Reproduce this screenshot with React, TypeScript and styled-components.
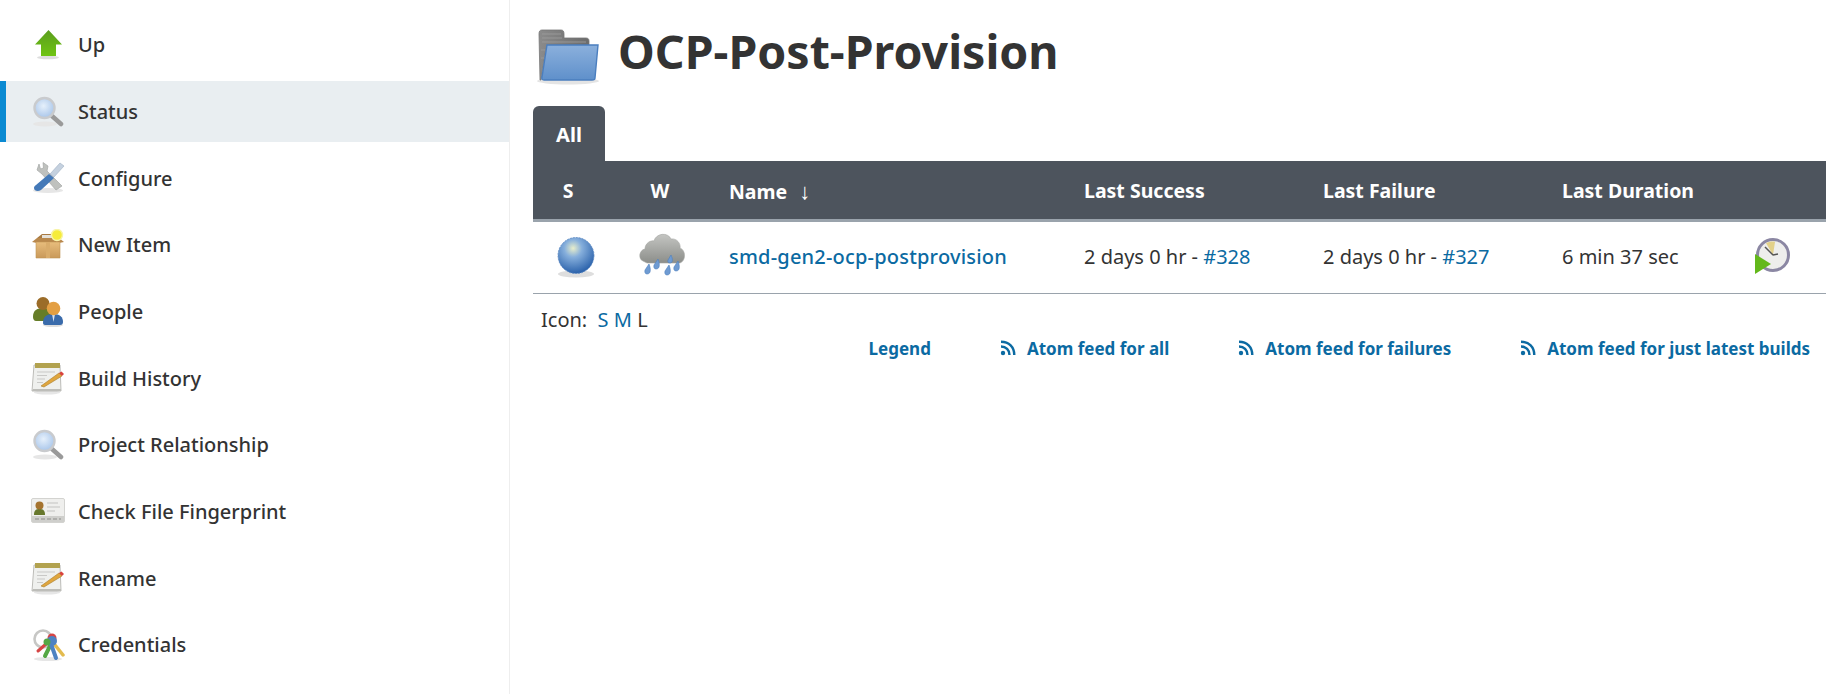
import React from "react";
import styled, { createGlobalStyle } from "styled-components";

const GlobalStyle = createGlobalStyle`
  html, body {
    margin: 0;
    padding: 0;
    background: #fff;
    color: #333;
    font-family: "Noto Sans", "Open Sans", sans-serif;
    overflow: hidden;
  }
`;

//Icons
const Defs = () => (
  <svg width="0" height="0" style={{ position: "absolute" }}>
    <defs>
      <radialGradient id="lens" cx="45%" cy="40%" r="60%">
        <stop offset="0%" stopColor="#e6f0fb" />
        <stop offset="100%" stopColor="#a9c6ea" />
      </radialGradient>
      <linearGradient id="arrow" x1="0" y1="0" x2="0" y2="1">
        <stop offset="0%" stopColor="#5b9d1e" />
        <stop offset="100%" stopColor="#6fc412" />
      </linearGradient>
      <linearGradient id="box" x1="0" y1="0" x2="0" y2="1">
        <stop offset="0%" stopColor="#e8bd7c" />
        <stop offset="100%" stopColor="#c9995a" />
      </linearGradient>
      <radialGradient id="ball" cx="42%" cy="30%" r="70%">
        <stop offset="0%" stopColor="#e8eecb" />
        <stop offset="35%" stopColor="#86afdc" />
        <stop offset="100%" stopColor="#2b62ab" />
      </radialGradient>
      <linearGradient id="cloud" x1="0" y1="0" x2="0" y2="1">
        <stop offset="0%" stopColor="#c4c5c2" />
        <stop offset="100%" stopColor="#8c8e8a" />
      </linearGradient>
      <linearGradient id="folderFront" x1="0" y1="0" x2="0" y2="1">
        <stop offset="0%" stopColor="#8bb0dc" />
        <stop offset="100%" stopColor="#5f90cb" />
      </linearGradient>
      <linearGradient id="folderBack" x1="0" y1="0" x2="1" y2="0">
        <stop offset="0%" stopColor="#8b8b8b" />
        <stop offset="100%" stopColor="#6b6b6b" />
      </linearGradient>
    </defs>
  </svg>
);

const UpIcon = () => (
  <svg width="32" height="32" viewBox="0 0 32 32">
    <ellipse cx="16" cy="28.5" rx="11" ry="1.8" fill="#ddd" />
    <path d="M16.5 1 L30 15.5 H24 V27 H9 V15.5 H3 Z" fill="url(#arrow)" />
  </svg>
);

const SearchIcon = () => (
  <svg width="32" height="32" viewBox="0 0 32 32">
    <ellipse cx="13" cy="28" rx="12" ry="2.5" fill="#e6e6e6" />
    <path d="M20 20 L29 28" stroke="#9a9a9a" strokeWidth="4.5" strokeLinecap="round" />
    <circle cx="12.5" cy="12" r="10" fill="url(#lens)" stroke="#c9cbce" strokeWidth="2.4" />
  </svg>
);

const ConfigureIcon = () => (
  <svg width="34" height="32" viewBox="0 0 34 32">
    <ellipse cx="17" cy="28.5" rx="15" ry="2.4" fill="#e6e6e6" />
    <path d="M8 2 L6 8 L11 12 L25 28 L31 24 L16 9 L17 4 L12 0.5 L12.5 6 L9.5 7 Z" fill="#bfc1be" stroke="#a5a7a6" strokeWidth="0.7" />
    <path d="M29 1 L33 4 L23 15 L19 12 Z" fill="#c5d1df" stroke="#9fb0c2" strokeWidth="0.6" />
    <path d="M18 12 L23 16 L10 28 C7 30 3 29 3 26 C3 25 3.500 24 5 23 Z" fill="#4479b8" />
  </svg>
);

const NewItemIcon = () => (
  <svg width="34" height="32" viewBox="0 0 34 32">
    <path d="M6 9 L11 5 H25 L28 9 Z" fill="#a97a42" />
    <rect x="11" y="6" width="13" height="4" fill="#e5e1d8" />
    <path d="M1 13 L6 9 H28 L33 13 L28 14 H6 Z" fill="#b9884c" />
    <path d="M5 13 H29 V29 H5 Z" fill="url(#box)" stroke="#c19355" strokeWidth="0.6" />
    <rect x="15" y="13" width="4" height="16" fill="#d9ac6b" />
    <circle cx="26" cy="6" r="5.5" fill="#f6ec3a" stroke="#f8f4a8" strokeWidth="1.4" />
  </svg>
);

const PeopleIcon = () => (
  <svg width="32" height="32" viewBox="0 0 32 32">
    <ellipse cx="21" cy="29" rx="10" ry="2" fill="#ddd" />
    <path d="M1 21 C1 14 5 12 12 12 C18 12 20 14 20 19 L14 25 H4 C2 25 1 23 1 21 Z" fill="#667d28" />
    <circle cx="11" cy="7.500" r="6.500" fill="#9b6c28" />
    <path d="M11 27 C11 20 15 18 21.500 18 C28 18 31 21 31 26 C31 28 30 29 28 29 H13 C12 29 11 28 11 27 Z" fill="#3a6bab" />
    <path d="M20 18 H23 L21.500 26 Z" fill="#dce5ef" />
    <circle cx="21.500" cy="12.500" r="6.800" fill="#e39f43" />
  </svg>
);

const NotepadIcon = () => (
  <svg width="34" height="33" viewBox="0 0 34 33">
    <ellipse cx="16" cy="30.500" rx="13" ry="2" fill="#e6e6e6" />
    <path d="M3 3 H29 L30 29 H1 Z" fill="#eff0ee" stroke="#bcbcb8" strokeWidth="1" />
    <path d="M2 27 H30 V29 H1 Z" fill="#bdbdb9" />
    <rect x="4" y="1" width="25" height="5" fill="#b2a24f" />
    <path d="M6 10 H24 M6 13.500 H16 M6 17 H14 M6 20.500 H12" stroke="#c9c9c7" strokeWidth="1" />
    <path d="M10 24 L28 11 L31 14 L13 25 Z" fill="#e0a63e" stroke="#a87d2e" strokeWidth="0.6" />
    <path d="M28 11 L30.500 9.500 L33 12 L31 14 Z" fill="#d9423d" />
  </svg>
);

const FingerprintIcon = () => (
  <svg width="34" height="26" viewBox="0 0 34 26">
    <rect x="0.500" y="0.500" width="33" height="24" rx="1.500" fill="#efefed" stroke="#d3d3d0" />
    <rect x="1" y="18" width="32" height="6" fill="#cfcfcc" />
    <path d="M3 17 C3 12 5 11 8.500 11 C12 11 14 12 14 17 Z" fill="#67782d" />
    <circle cx="8.500" cy="7.500" r="4" fill="#a5732f" />
    <path d="M16 5 H27 M16 9 H29 M16 13 H24" stroke="#c4c4c1" strokeWidth="1.200" />
    <path d="M4 21 H30" stroke="#8f8f8c" strokeWidth="1" strokeDasharray="4 2" />
  </svg>
);

const CredentialsIcon = () => (
  <svg width="34" height="34" viewBox="0 0 34 34">
    <ellipse cx="17" cy="31" rx="14" ry="2" fill="#e6e6e6" />
    <circle cx="12" cy="11" r="8.500" fill="none" stroke="#c7c7c5" strokeWidth="2.600" />
    <path d="M24 17 L32 27" stroke="#e3bb4e" strokeWidth="3.500" strokeLinecap="round" />
    <circle cx="21" cy="10" r="4.500" fill="#d64545" />
    <path d="M15 16 L7 23" stroke="#d64545" strokeWidth="3" strokeLinecap="round" />
    <path d="M19 18 L14 28" stroke="#55a845" strokeWidth="4" strokeLinecap="round" />
    <path d="M20 16 L25 30" stroke="#4d82c2" strokeWidth="4" strokeLinecap="round" />
    <circle cx="21" cy="13" r="5" fill="#4d82c2" />
    <circle cx="16" cy="14" r="3.500" fill="#55a845" />
  </svg>
);

const FolderIcon = () => (
  <svg width="64" height="58" viewBox="0 0 64 58">
    <ellipse cx="32" cy="53" rx="31" ry="3.500" fill="#e4e4e4" />
    <path d="M3 6 C3 3 4 2 6 2 H25 C27 2 28 3 28 6 V10 H50 C52 10 53 11 53 13 V20 H10 L5 52 H4 Z" fill="url(#folderBack)" stroke="#777" strokeWidth="0.8" />
    <path d="M6 6 H25 M6 10 H26 M6 14 H50 M5 22 H9 M5 30 H8" stroke="#a0a0a0" strokeWidth="0.8" />
    <path d="M11 17 H62 L59 50 C59 51 58 52 56 52 H8 C6 52 5.500 51 6 49 Z" fill="url(#folderFront)" stroke="#4a7ebf" strokeWidth="1.400" />
  </svg>
);

const BallIcon = () => (
  <svg width="40" height="42" viewBox="0 0 40 42">
    <ellipse cx="20" cy="37" rx="18" ry="3.500" fill="#dedede" />
    <circle cx="20" cy="18.500" r="18" fill="url(#ball)" stroke="#5a88c2" strokeWidth="0.8" strokeDasharray="2 1" />
  </svg>
);

const RainIcon = () => (
  <svg width="46" height="44" viewBox="0 0 46 44">
    <path d="M4 29 C-1 27 0 18 6 17 C6 11 12 8 15 9 C17 1 29 0 32 7 C38 6 42 12 41 16 C47 18 47 29 41 31 H8 Z" fill="url(#cloud)" stroke="#a4a6a2" strokeWidth="0.6" />
    <g fill="#6f9bd2" stroke="#4e7fbd" strokeWidth="0.6">
      <path d="M6 38 L10 32 C12 37 12 42 8 42 C6 42 5.500 40 6 38 Z" />
      <path d="M15 33 L19 27 C21 32 21 37 17 37 C15 37 14.500 35 15 33 Z" />
      <path d="M26 39 L30 33 C32 38 32 43 28 43 C26 43 25.500 41 26 39 Z" />
      <path d="M35 35 L39 29 C41 34 41 39 37 39 C35 39 34.500 37 35 35 Z" />
      <path d="M29 28 L32 23 C34 27 34 31 31 31 C29 31 28.500 30 29 28 Z" />
    </g>
  </svg>
);

const ClockIcon = () => (
  <svg width="36" height="36" viewBox="0 0 36 36">
    <circle cx="19" cy="17" r="15.500" fill="#eeeeec" stroke="#8b87a3" strokeWidth="3" />
    <path d="M19 17 L12 5 C14 4 20 3 21 4 Z" fill="#e3d189" />
    <path d="M19 17 L11 9 M19 17 L24 16" stroke="#555" strokeWidth="1.500" />
    <path d="M1 16 L17 26 L1 36 Z" fill="#63b81b" />
  </svg>
);

const RssIcon = () => (
  <svg width="16" height="16" viewBox="0 0 16 16">
    <circle cx="3" cy="13" r="2.200" fill="#0b6aa2" />
    <path d="M1 6.500 C6 6.500 9.500 10 9.500 15" fill="none" stroke="#0b6aa2" strokeWidth="2.400" />
    <path d="M1 1.700 C9 1.700 14.300 7 14.300 15" fill="none" stroke="#0b6aa2" strokeWidth="2.400" />
  </svg>
);

const menu = [
  { label: "Up", icon: <UpIcon /> },
  { label: "Status", icon: <SearchIcon />, active: true },
  { label: "Configure", icon: <ConfigureIcon /> },
  { label: "New Item", icon: <NewItemIcon /> },
  { label: "People", icon: <PeopleIcon /> },
  { label: "Build History", icon: <NotepadIcon /> },
  { label: "Project Relationship", icon: <SearchIcon /> },
  { label: "Check File Fingerprint", icon: <FingerprintIcon /> },
  { label: "Rename", icon: <NotepadIcon /> },
  { label: "Credentials", icon: <CredentialsIcon /> },
];

const feeds = [
  "Atom feed for all",
  "Atom feed for failures",
  "Atom feed for just latest builds",
];

const App: React.FC = () => {
  return (
    <Page>
      <GlobalStyle />
      <Defs />
      <Sidebar>
        {menu.map((item) => (
          <MenuItem key={item.label} $active={item.active}>
            <MenuIcon>{item.icon}</MenuIcon>
            {item.label}
          </MenuItem>
        ))}
      </Sidebar>
      <Main>
        <Title>
          <FolderIcon />
          <h1>OCP-Post-Provision</h1>
        </Title>
        <Tab>All</Tab>
        <ProjectTable>
          <colgroup>
            <col width="70" />
            <col width="126" />
            <col width="355" />
            <col width="239" />
            <col width="239" />
            <col width="190" />
            <col />
          </colgroup>
          <thead>
            <tr>
              <th className="center">S</th>
              <th className="center weather">W</th>
              <th>
                Name<SortArrow>↓</SortArrow>
              </th>
              <th>Last Success</th>
              <th>Last Failure</th>
              <th>Last Duration</th>
              <th />
            </tr>
          </thead>
          <tbody>
            <tr>
              <td className="center status">
                <BallIcon />
              </td>
              <td className="center rain">
                <RainIcon />
              </td>
              <td>
                <Link $medium>smd-gen2-ocp-postprovision</Link>
              </td>
              <td>
                2 days 0 hr - <Link>#328</Link>
              </td>
              <td>
                2 days 0 hr - <Link>#327</Link>
              </td>
              <td>6 min 37 sec</td>
              <td className="action">
                <ClockIcon />
              </td>
            </tr>
          </tbody>
        </ProjectTable>
        <IconSizes>
          Icon:&nbsp;&nbsp;
          <Link>S</Link> <Link>M</Link> <span>L</span>
        </IconSizes>
        <Feeds>
          <FeedLink>Legend</FeedLink>
          {feeds.map((feed) => (
            <FeedLink key={feed}>
              <RssIcon />
              {feed}
            </FeedLink>
          ))}
        </Feeds>
      </Main>
    </Page>
  );
};

const Page = styled.div`
  display: flex;
  height: 694px;
  overflow: hidden;
`;

const Sidebar = styled.nav`
  flex: 0 0 509px;
  display: flex;
  flex-direction: column;
  gap: 5.67px;
  padding-top: 14.400px;
  border-right: 1px solid #eee;
`;

const MenuItem = styled.a<{ $active?: boolean }>`
  display: flex;
  align-items: center;
  gap: 14px;
  height: 61px;
  flex: none;
  padding-left: ${(p) => (p.$active ? "26px" : "32px")};
  font-size: 20px;
  font-weight: 500;
  color: #333;
  background: ${(p) => (p.$active ? "#e9eef1" : "transparent")};
  border-left: ${(p) => (p.$active ? "6px solid #0b8ad2" : "0")};
`;

const MenuIcon = styled.span`
  flex: none;
  width: 32px;
  height: 34px;
  display: flex;
  align-items: center;
  justify-content: center;
  svg {
    flex: none;
    filter: blur(0.3px);
  }
`;

const Main = styled.main`
  flex: 1;
  min-width: 0;
  padding: 28px 0 0 23px;
`;

const Title = styled.div`
  display: flex;
  align-items: flex-start;
  gap: 18px;
  height: 58px;
  padding-left: 3px;
  margin-bottom: 20px;
  h1 {
    margin: 0;
    font-size: 46.500px;
    font-weight: 700;
    line-height: 46px;
    color: #333;
  }
`;

const Tab = styled.div`
  width: 72px;
  height: 55px;
  box-sizing: border-box;
  padding-top: 15px;
  background: #4d545d;
  border-radius: 6px 6px 0 0;
  color: #fff;
  font-size: 20px;
  font-weight: 700;
  text-align: center;
  line-height: 27px;
`;

const ProjectTable = styled.table`
  width: 100%;
  table-layout: fixed;
  border-collapse: collapse;
  font-size: 20px;
  th {
    height: 59px;
    padding: 1px 0 0;
    box-sizing: border-box;
    background: #4d545d;
    border-bottom: 3px solid #9aa3ac;
    color: #fff;
    font-size: 19.500px;
    font-weight: 700;
    text-align: left;
  }
  td {
    height: 65px;
    padding: 0 0 2px;
    border-bottom: 1px solid #9aa3ac;
    vertical-align: middle;
    svg {
      display: block;
      filter: blur(0.3px);
    }
  }
  .center {
    text-align: center;
    svg {
      margin: 0 auto;
    }
  }
  .weather {
    padding-right: 12px;
  }
  td.status {
    padding: 2px 0 0 16px;
  }
  td.rain {
    padding: 0 8px 6px 0;
  }
  td.action {
    padding: 0 0 2px 2px;
  }
`;

const SortArrow = styled.span`
  margin-left: 12px;
  font-size: 22px;
`;

const Link = styled.a<{ $medium?: boolean }>`
  color: #0b6aa2;
  font-weight: ${(p) => (p.$medium ? 500 : 400)};
  letter-spacing: ${(p) => (p.$medium ? "0.2px" : "0")};
`;

const IconSizes = styled.div`
  padding: 12px 0 0 8px;
  font-size: 20px;
  line-height: 27px;
`;

const Feeds = styled.div`
  display: flex;
  justify-content: flex-end;
  gap: 69px;
  padding: 4px 16px 0 0;
`;

const FeedLink = styled.a`
  display: flex;
  align-items: center;
  gap: 11px;
  color: #0b6aa2;
  font-size: 17px;
  font-weight: 700;
  line-height: 23px;
`;

export default App;
